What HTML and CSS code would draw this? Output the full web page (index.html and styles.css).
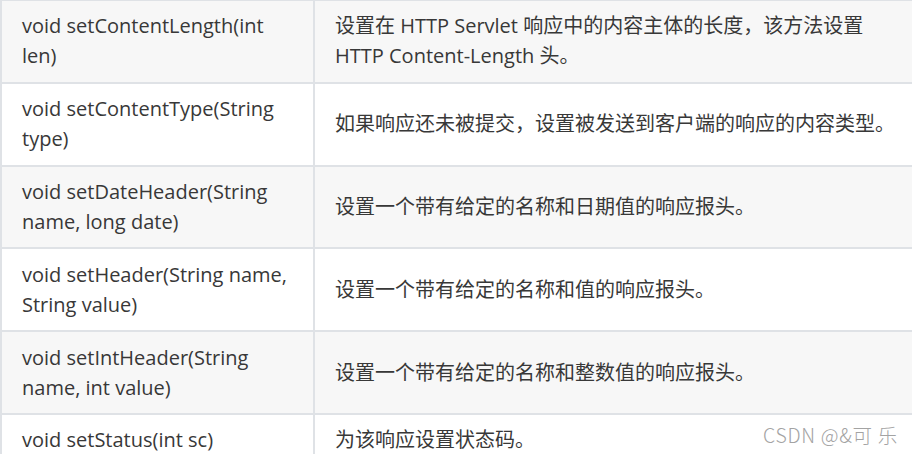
FILE: index.html
```html
<!DOCTYPE html>
<html lang="zh-CN">
<head>
<meta charset="utf-8">
<title>HttpServletResponse</title>
<link rel="stylesheet" href="styles.css">
</head>
<body>
<div class="page">
  <table class="api">
    <colgroup><col class="c-method"><col class="c-desc"></colgroup>
    <tbody>
      <tr><td>void setContentLength(int len)</td><td>设置在 HTTP Servlet 响应中的内容主体的长度，该方法设置 HTTP Content-Length 头。</td></tr>
      <tr><td>void setContentType(String type)</td><td>如果响应还未被提交，设置被发送到客户端的响应的内容类型。</td></tr>
      <tr><td>void setDateHeader(String name, long date)</td><td>设置一个带有给定的名称和日期值的响应报头。</td></tr>
      <tr><td>void setHeader(String name, String value)</td><td>设置一个带有给定的名称和值的响应报头。</td></tr>
      <tr><td>void setIntHeader(String name, int value)</td><td>设置一个带有给定的名称和整数值的响应报头。</td></tr>
      <tr><td>void setStatus(int sc)</td><td>为该响应设置状态码。</td></tr>
    </tbody>
  </table>
  <div class="watermark">CSDN @&amp;可 乐</div>
</div>
</body>
</html>
```
FILE: styles.css
```css
html, body {
  margin: 0;
  padding: 0;
  overflow: hidden;
  background: #fff;
}
.page {
  position: relative;
  width: 912px;
  height: 454px;
  overflow: hidden;
}
.api {
  border-collapse: collapse;
  table-layout: fixed;
  width: 925px;
  margin-top: -1px;
  font-family: "Open Sans", "Noto Sans CJK SC", sans-serif;
  font-size: 20px;
  line-height: 30px;
  color: #383838;
}
.c-method { width: 313px; }
.c-desc { width: 612px; }
.api td {
  border: 2px solid #dfe2e6;
  padding: 10.4px 20px;
  vertical-align: middle;
}
.api tr:nth-child(odd) td { background: #f7f7f7; }
.api tr:nth-child(even) td { background: #fff; }
.watermark {
  position: absolute;
  right: 14px;
  bottom: 5px;
  font-family: "Noto Sans CJK SC", sans-serif;
  font-size: 19.5px;
  font-weight: 300;
  color: #a3a3a3;
  letter-spacing: 0.7px;
}
```
